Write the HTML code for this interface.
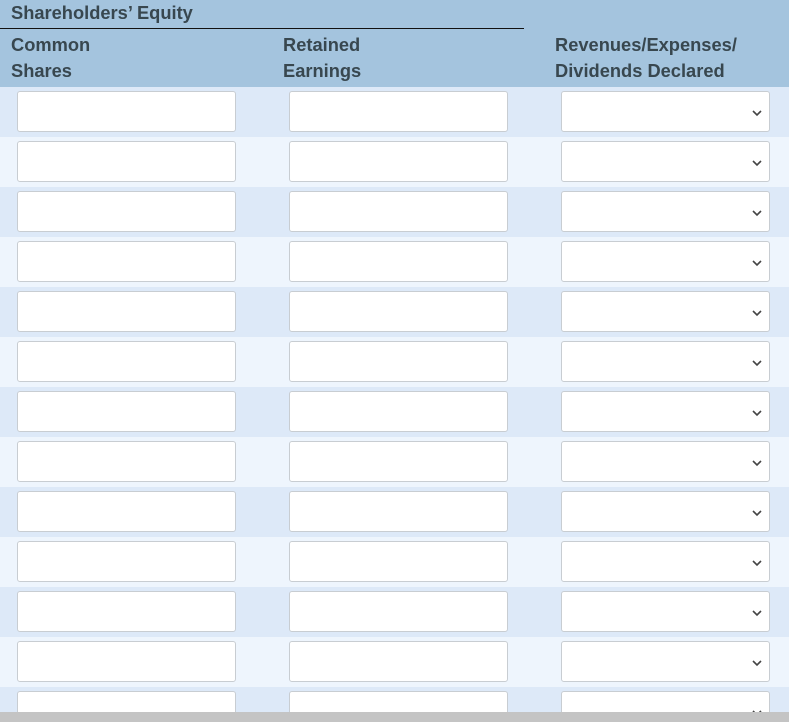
<!DOCTYPE html>
<html><head><style>
*{margin:0;padding:0;box-sizing:border-box}
body{width:789px;height:722px;overflow:hidden;background:#c4c4c4;font-family:"Liberation Sans",sans-serif;color:#2d3b45;position:relative}
.hdr{position:absolute;left:0;top:0;width:789px;height:87px;background:#a4c4de}
.t{position:absolute;font-size:18.3px;font-weight:bold;line-height:24px;white-space:nowrap;color:#38474f}
.line{position:absolute;left:0;top:28px;width:524px;height:1px;background:#111}
.row{position:absolute;left:0;width:789px;height:50px;overflow:hidden}
.a{background:#dde9f8}.b{background:#eef5fd}
.in{position:absolute;top:4px;height:41px;background:#fff;border:1px solid #c8cdd2;border-radius:3px}
.c1{left:17px;width:219px}.c2{left:289px;width:219px}.c3{left:561px;width:209px}
.chev{position:absolute;right:6px;top:16px}
</style></head><body>
<div class="hdr">
<div class="t" style="left:11px;top:1px">Shareholders’ Equity</div>
<div class="line"></div>
<div class="t" style="left:11px;top:33px">Common</div>
<div class="t" style="left:11px;top:59px">Shares</div>
<div class="t" style="left:283px;top:33px">Retained</div>
<div class="t" style="left:283px;top:59px">Earnings</div>
<div class="t" style="left:555px;top:33px">Revenues/Expenses/</div>
<div class="t" style="left:555px;top:59px">Dividends Declared</div>
</div>
<div class="row a" style="top:87px"><div class="in c1"></div><div class="in c2"></div><div class="in c3"><svg class="chev" width="12" height="10" viewBox="0 0 12 10"><path d="M2 3 L6 7 L10 3" fill="none" stroke="#444" stroke-width="1.6"/></svg></div></div>
<div class="row b" style="top:137px"><div class="in c1"></div><div class="in c2"></div><div class="in c3"><svg class="chev" width="12" height="10" viewBox="0 0 12 10"><path d="M2 3 L6 7 L10 3" fill="none" stroke="#444" stroke-width="1.6"/></svg></div></div>
<div class="row a" style="top:187px"><div class="in c1"></div><div class="in c2"></div><div class="in c3"><svg class="chev" width="12" height="10" viewBox="0 0 12 10"><path d="M2 3 L6 7 L10 3" fill="none" stroke="#444" stroke-width="1.6"/></svg></div></div>
<div class="row b" style="top:237px"><div class="in c1"></div><div class="in c2"></div><div class="in c3"><svg class="chev" width="12" height="10" viewBox="0 0 12 10"><path d="M2 3 L6 7 L10 3" fill="none" stroke="#444" stroke-width="1.6"/></svg></div></div>
<div class="row a" style="top:287px"><div class="in c1"></div><div class="in c2"></div><div class="in c3"><svg class="chev" width="12" height="10" viewBox="0 0 12 10"><path d="M2 3 L6 7 L10 3" fill="none" stroke="#444" stroke-width="1.6"/></svg></div></div>
<div class="row b" style="top:337px"><div class="in c1"></div><div class="in c2"></div><div class="in c3"><svg class="chev" width="12" height="10" viewBox="0 0 12 10"><path d="M2 3 L6 7 L10 3" fill="none" stroke="#444" stroke-width="1.6"/></svg></div></div>
<div class="row a" style="top:387px"><div class="in c1"></div><div class="in c2"></div><div class="in c3"><svg class="chev" width="12" height="10" viewBox="0 0 12 10"><path d="M2 3 L6 7 L10 3" fill="none" stroke="#444" stroke-width="1.6"/></svg></div></div>
<div class="row b" style="top:437px"><div class="in c1"></div><div class="in c2"></div><div class="in c3"><svg class="chev" width="12" height="10" viewBox="0 0 12 10"><path d="M2 3 L6 7 L10 3" fill="none" stroke="#444" stroke-width="1.6"/></svg></div></div>
<div class="row a" style="top:487px"><div class="in c1"></div><div class="in c2"></div><div class="in c3"><svg class="chev" width="12" height="10" viewBox="0 0 12 10"><path d="M2 3 L6 7 L10 3" fill="none" stroke="#444" stroke-width="1.6"/></svg></div></div>
<div class="row b" style="top:537px"><div class="in c1"></div><div class="in c2"></div><div class="in c3"><svg class="chev" width="12" height="10" viewBox="0 0 12 10"><path d="M2 3 L6 7 L10 3" fill="none" stroke="#444" stroke-width="1.6"/></svg></div></div>
<div class="row a" style="top:587px"><div class="in c1"></div><div class="in c2"></div><div class="in c3"><svg class="chev" width="12" height="10" viewBox="0 0 12 10"><path d="M2 3 L6 7 L10 3" fill="none" stroke="#444" stroke-width="1.6"/></svg></div></div>
<div class="row b" style="top:637px"><div class="in c1"></div><div class="in c2"></div><div class="in c3"><svg class="chev" width="12" height="10" viewBox="0 0 12 10"><path d="M2 3 L6 7 L10 3" fill="none" stroke="#444" stroke-width="1.6"/></svg></div></div>
<div class="row a" style="top:687px;height:25px"><div class="in c1"></div><div class="in c2"></div><div class="in c3"><svg class="chev" width="12" height="10" viewBox="0 0 12 10"><path d="M2 3 L6 7 L10 3" fill="none" stroke="#444" stroke-width="1.6"/></svg></div></div>
</body></html>
